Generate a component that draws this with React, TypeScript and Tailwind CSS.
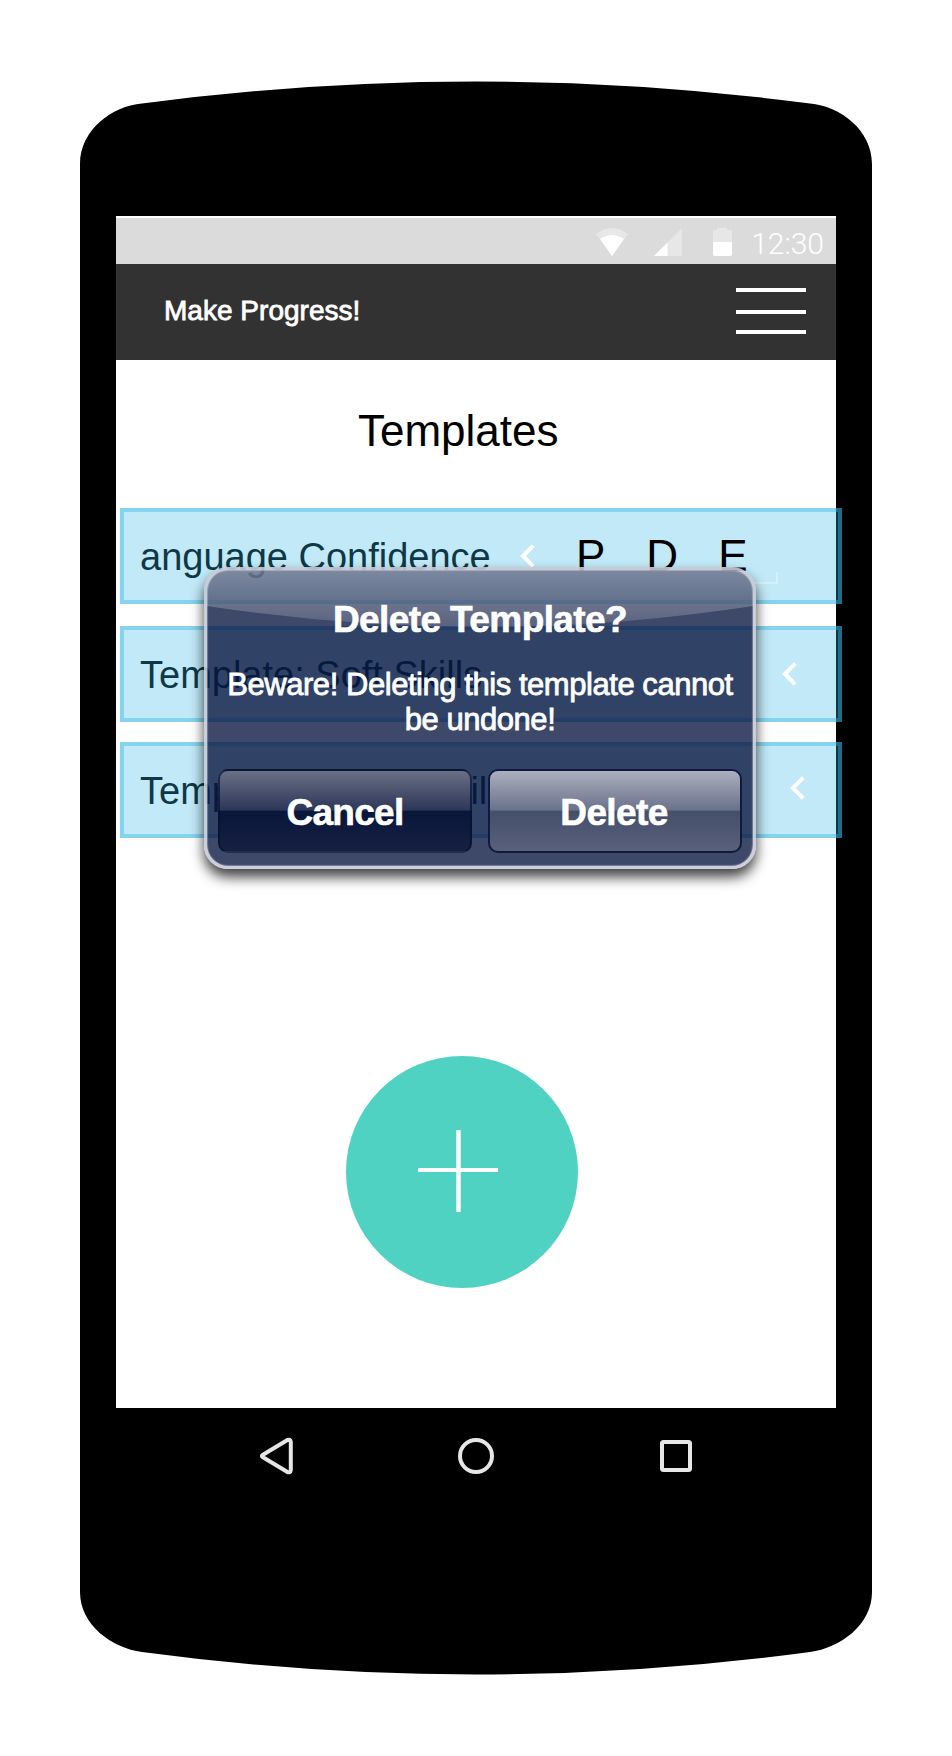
import type { ReactNode } from "react";

function Chevron({ className = "" }: { className?: string }) {
  return (
    <svg className={"absolute h-6 w-4 " + className} viewBox="0 0 16 24" fill="none" stroke="#fff" strokeWidth="4">
      <path d="M13.3 1.6 2.900 12l10.400 10.400" />
    </svg>
  );
}

function Row({ label, className = "", children }: { label: string; className?: string; children?: ReactNode }) {
  return (
    <li className={"relative h-24 w-[722px] " + className}>
      <div className="flex h-full items-center pl-5 text-[38px] leading-none whitespace-nowrap text-black">
        <span className="pt-[1px]">{label}</span>
      </div>
      <div className="absolute inset-0 border-4 border-[#33b5e5]/60 bg-[#33b5e5]/30 bg-clip-padding" />
      {children}
    </li>
  );
}

function Dialog() {
  return (
    <div
      role="alertdialog"
      className="absolute top-[351px] left-[88px] h-[302px] w-[552px] rounded-[24px] shadow-[0_8px_13px_rgba(0,0,0,0.75)]"
    >
      <div className="relative flex h-full w-full flex-col overflow-hidden rounded-[24px] border-[3px] border-[#c6cad5]/90 bg-[#04113c]/77 bg-clip-padding px-[11px] shadow-[inset_0_0_1px_1px_rgba(160,168,190,0.6)]">
        <svg className="absolute top-0 left-0 h-[60px] w-full" viewBox="0 0 546 60" preserveAspectRatio="none">
          <defs>
            <linearGradient id="gloss" x1="0" y1="0" x2="0" y2="1">
              <stop offset="0" stopColor="#fff" stopOpacity="0.37" />
              <stop offset="1" stopColor="#fff" stopOpacity="0.14" />
            </linearGradient>
          </defs>
          <path d="M0 0H546V36Q273 78 0 36Z" fill="url(#gloss)" />
        </svg>
        <h2 className="relative mt-[30px] text-center text-[37px] leading-[40px] font-bold tracking-[-0.6px] text-white [-webkit-text-stroke:0.6px_white]">Delete Template?</h2>
        <p className="relative mt-[27px] text-center text-[31px] leading-[35px] tracking-[-0.45px] whitespace-nowrap text-white [-webkit-text-stroke:0.8px_white]">
          Beware! Deleting this template cannot
          <br />
          be undone!
        </p>
        <div className="relative mt-auto mb-[13px] flex justify-between">
          <button className="h-[84px] w-[254px] rounded-[10px] border-2 border-[#061030]/70 bg-[linear-gradient(#6a7085,#2c3658_49%,#08163a_50%,#162042)] pt-[3px] text-[37px] font-bold tracking-[-0.7px] text-white [-webkit-text-stroke:0.6px_white]">Cancel</button>
          <button className="h-[84px] w-[254px] rounded-[10px] border-2 border-[#101a3c] bg-[linear-gradient(#acafbe,#69728a_49%,#444f69_50%,#5a607b)] pt-[3px] pr-[2px] text-[37px] font-bold tracking-[-0.6px] text-white [-webkit-text-stroke:0.6px_white]">Delete</button>
        </div>
      </div>
    </div>
  );
}

export default function App() {
  return (
    <main className="relative flex h-[1756px] w-[952px] flex-col items-center bg-white font-['Liberation_Sans',Arial,sans-serif]">
      <svg className="absolute inset-0 h-full w-full" viewBox="0 0 952 1756">
        <path d="M80 164C80 130 112 106 142 103.500Q476 59.500 810 103.500C840 106 872 130 872 164V1592C872 1625 840 1648 810 1652Q476 1697 142 1652C112 1648 80 1625 80 1592Z" />
      </svg>
      <section className="relative mt-[216px] flex h-[1192px] w-[720px] flex-col bg-white pt-0.5">
        <div className="flex h-[46px] items-center justify-end bg-[#dbdbdb] pr-[12px]">
          <svg className="mt-[2px] mr-[17px] h-7 w-[138px]" viewBox="0 0 138 28">
            <path d="M0 6Q16-6 32 6L16 28Z" fill="#e7e7e7" />
            <path d="M4 11Q16 3 28 11L16 28Z" fill="#fff" />
            <path d="M86 0V28H58Z" fill="#e7e7e7" />
            <path d="M71.500 14.500V28H58Z" fill="#fff" />
            <path d="M121 0h10v2h3.500a1.500 1.500 0 0 1 1.500 1.500V14h-19V3.500A1.500 1.500 0 0 1 118.500 2H121Z" fill="#e7e7e7" />
            <path d="M117 14h19v12a2 2 0 0 1-2 2h-15a2 2 0 0 1-2-2Z" fill="#fff" />
          </svg>
          <time className="pt-[6px] font-[Roboto] text-[30px] leading-none font-light text-white">12:30</time>
        </div>
        <header className="flex h-24 items-center justify-between bg-[#323232] pr-[30px] pl-12">
          <h1 className="-mt-[3px] text-[28px] tracking-[0.02px] text-white [-webkit-text-stroke:0.8px_white]">Make Progress!</h1>
          <svg className="-mt-[2px] h-[46px] w-[70px]" viewBox="0 0 70 46" fill="#fff">
            <path d="M0 0H70V4H0ZM0 22H70V26H0ZM0 42H70V46H0Z" />
          </svg>
        </header>
        <h2 className="mt-[45px] pl-[242px] text-[44px] leading-[52px] text-black">Templates</h2>
        <ul className="mt-[51px] pl-1">
          <Row label="anguage Confidence">
            <Chevron className="top-9 left-[400px]" />
            <svg className="absolute top-16 left-[634px] h-3 w-6" viewBox="0 0 24 12" fill="none" stroke="#fff" strokeOpacity=".35" strokeWidth="2">
              <path d="M0 11H23V0" />
            </svg>
            <div className="absolute top-[26px] left-[456px] flex gap-10 text-[44px] leading-none text-black">
              <span>P</span>
              <span className="pl-[1px]">D</span>
              <span>E</span>
            </div>
          </Row>
          <Row label="Template: Soft Skills" className="mt-[22px]">
            <Chevron className="top-9 left-[662px]" />
          </Row>
          <Row label="Template: Study Skills" className="mt-5 [word-spacing:1.5px]">
            <Chevron className="top-[34px] left-[670px]" />
          </Row>
        </ul>
        <button className="mt-[218px] ml-[230px] flex size-[232px] items-center justify-center rounded-full bg-[#50d2c2]">
          <svg className="size-[232px]" viewBox="0 0 232 232" fill="#fff">
            <path d="M72 112H152V116H72ZM110.300 74H114.700V156H110.300Z" />
          </svg>
        </button>
        <Dialog />
      </section>
      <nav className="relative mt-[30px] flex h-9 w-[432px] items-center justify-between">
        <svg className="h-9 w-8 overflow-visible" viewBox="0 0 32 36" fill="none" stroke="#e6e6e6" strokeWidth="4" strokeLinejoin="round">
          <path d="M3 16.700 27 2.200Q30.500.7 30.800 4V32Q30.500 35.300 27 33.800L3 19.300Q.8 18 3 16.700Z" />
        </svg>
        <svg className="h-9 w-9" viewBox="0 0 36 36" fill="none" stroke="#e6e6e6" strokeWidth="4">
          <circle cx="18" cy="18" r="16" />
        </svg>
        <svg className="h-8 w-8" viewBox="0 0 32 32" fill="none" stroke="#e6e6e6" strokeWidth="4">
          <rect x="2" y="2" width="28" height="28" rx="1.500" />
        </svg>
      </nav>
    </main>
  );
}
